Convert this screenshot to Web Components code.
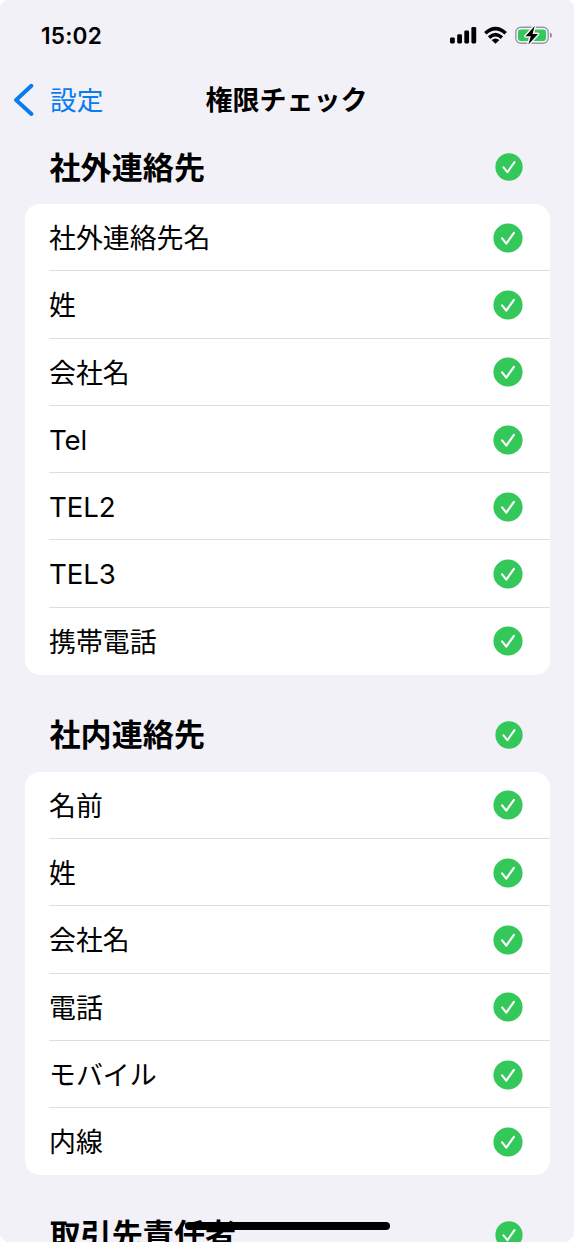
<!DOCTYPE html>
<html lang="ja">
<head>
<meta charset="utf-8">
<title>権限チェック</title>
<style>
html,body{margin:0;background:#fff;overflow:hidden}
body{font-family:Inter,"Noto Sans CJK JP",sans-serif;color:#000}
</style>
</head>
<body>
<permission-screen></permission-screen>
<script>
const define = (name, html, setup) => customElements.define(name, class extends HTMLElement {
  constructor() {
    super();
    this.attachShadow({mode: 'open'});
  }
  connectedCallback() {
    const t = document.createElement('template');
    t.innerHTML = html;
    this.shadowRoot.replaceChildren(t.content.cloneNode(true));
    if (setup) setup(this);
  }
});

define('check-badge', `
<style>:host{display:block;flex:none;width:var(--badge,30px);height:var(--badge,30px)}svg{display:block;width:100%;height:100%}</style>
<svg viewBox="0 0 30 30"><circle cx="15" cy="15" r="14.6" fill="#34c759"/><path d="M9.1 15.4 13.3 20.6 20.9 9.8" fill="none" stroke="#fff" stroke-width="2.2" stroke-linecap="round" stroke-linejoin="round"/></svg>`);

define('status-bar', `
<style>
:host{display:flex;box-sizing:border-box;height:70px;padding:0 22px 0 41px;justify-content:space-between;align-items:center}
span{font:600 22.6px/30px Inter,sans-serif;letter-spacing:.2px;padding-top:1px}
svg{display:block}
</style>
<span>15:02</span>
<svg width="104" height="24" viewBox="448 23 104 24">
<g><rect x="450" y="37.4" width="4.8" height="6" rx="1.3"/><rect x="457.2" y="34.2" width="4.8" height="9.2" rx="1.3"/><rect x="464.3" y="30.6" width="4.8" height="12.8" rx="1.3"/><rect x="471.4" y="27" width="4.8" height="16.4" rx="1.3"/></g>
<g fill="none" stroke="#000" stroke-width="3.5"><path d="M485.3 33.3Q495.5 23.8 505.7 33.3"/><path d="M489.1 37.6Q495.5 31.6 501.9 37.6"/></g>
<path d="M491.6 40Q495.5 36.8 499.4 40L495.5 43.7Z"/>
<rect x="515.8" y="27.2" width="32.4" height="16" rx="5" fill="none" stroke="#9b9aa2" stroke-width="1.4"/>
<path d="M550 32.4Q552 33.2 552 35.2T550 38Z" fill="#8e8e96"/>
<rect x="518" y="29.4" width="28" height="11.6" rx="3" fill="#34c759"/>
<path d="M534.7 26 525.5 36.2H530.8L528.4 44.6 538 34.1H532.5Z" stroke="#f2f1f7" stroke-width="3" stroke-linejoin="round"/>
<path d="M534.7 26 525.5 36.2H530.8L528.4 44.6 538 34.1H532.5Z"/>
</svg>`);

define('nav-bar', `
<style>
:host{display:grid;grid-template-columns:1fr auto 1fr;align-items:center;height:60px}
.back{display:flex;align-items:center;color:#087cf0;padding-left:13px;gap:16px;font-size:26.7px;line-height:40px}
svg{display:block}
.title{font-size:27px;line-height:40px;font-weight:600;padding:2px 1px 0 0}
</style>
<div class="back"><svg width="21" height="34" viewBox="0 0 21 34"><path d="M18.4 2.8 3.1 17 18.4 31" fill="none" stroke="#087cf0" stroke-width="4" stroke-linecap="round" stroke-linejoin="round"/></svg><span>設定</span></div>
<div class="title"><slot></slot></div>`);

define('permission-row', `
<style>
:host{display:flex;box-sizing:border-box;height:67.3px;margin-left:24px;padding:1px 27px 0 0;align-items:center;justify-content:space-between;border-bottom:1px solid #dedee0;font-size:26.9px;line-height:40px}
:host(:last-of-type){border-bottom-color:transparent}
span{padding-top:1px}
.latin{font-size:27.6px;letter-spacing:-.1px;padding-top:0}
</style>
<span><slot></slot></span><check-badge></check-badge>`, el => {
  el.shadowRoot.querySelector('span').classList.toggle('latin', /^[\x20-\x7e]+$/.test(el.textContent));
});

define('permission-section', `
<style>
:host{display:block;padding:0 24.5px 22.6px 25px}
header{display:flex;height:74px;box-sizing:border-box;padding:0 27px 0 24.5px;align-items:center;justify-content:space-between;--badge:28px}
h2{margin:0;font-size:31.1px;line-height:46px;font-weight:600;padding-top:1px}
.card{background:#fff;border-radius:15px;overflow:hidden}
</style>
<header><h2></h2><check-badge></check-badge></header>
<div class="card"><slot></slot></div>`, el => {
  el.shadowRoot.querySelector('h2').textContent = el.getAttribute('heading');
});

define('home-indicator', `
<style>:host{display:block;position:absolute;left:185px;bottom:12.5px;width:205px;height:7.5px;border-radius:4px;background:#000}</style>`);

const section = (heading, rows) => `<permission-section heading="${heading}">${rows.map(r => `<permission-row>${r}</permission-row>`).join('')}</permission-section>`;

define('permission-screen', `
<style>
:host{display:block;position:relative;width:574px;height:1242px;overflow:hidden;background:#f2f1f7;clip-path:polygon(5px 0,569px 0,574px 5px,574px 1235px,568px 1242px,6px 1242px,0 1235px,0 5px)}
permission-section:last-of-type{margin-top:-.4px}
</style>
<status-bar></status-bar>
<nav-bar>権限チェック</nav-bar>
${section('社外連絡先', ['社外連絡先名', '姓', '会社名', 'Tel', 'TEL2', 'TEL3', '携帯電話'])}
${section('社内連絡先', ['名前', '姓', '会社名', '電話', 'モバイル', '内線'])}
${section('取引先責任者', [])}
<home-indicator></home-indicator>`);
</script>
</body>
</html>
